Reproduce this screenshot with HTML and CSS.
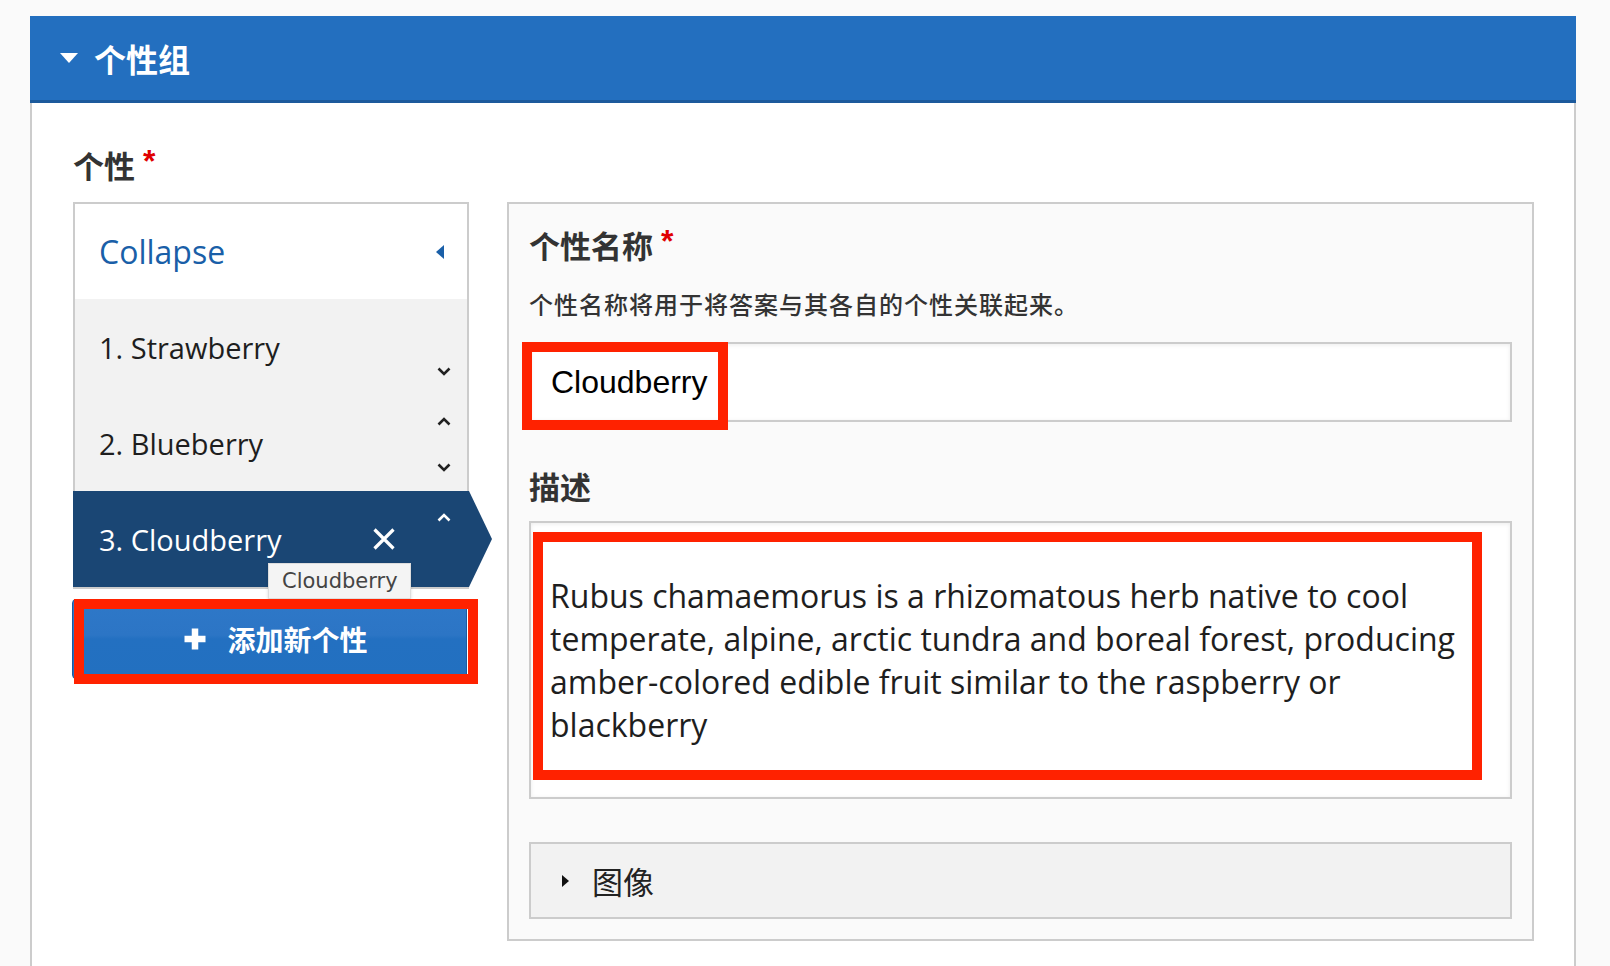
FILE: index.html
```html
<!DOCTYPE html>
<html lang="zh">
<head>
<meta charset="utf-8">
<title>个性组</title>
<link rel="stylesheet" href="styles.css">
</head>
<body>
<div class="page">
  <section class="group">
    <div class="group-head">
      <span class="tri-down"></span>
      <span class="group-title">个性组</span>
    </div>
    <div class="group-body">
      <div class="field-label">个性<span class="req">*</span></div>
      <div class="fields">
        <div class="left-col">
          <div class="tabs">
            <div class="tab-collapse">
              <span class="collapse-text">Collapse</span>
              <svg width="8" height="14" viewBox="0 0 8 14"><path d="M8 0 L0 7 L8 14Z" fill="#1a5fa8"/></svg>
            </div>
            <div class="tab">
              <span class="tab-text">1. Strawberry</span>
              <div class="arrows">
                <span class="ph"></span>
                <svg width="14" height="9" viewBox="0 0 14 9"><path d="M1.5 1.5 L7 7 L12.5 1.5" stroke="#222" stroke-width="2.6" fill="none"/></svg>
              </div>
            </div>
            <div class="tab">
              <span class="tab-text">2. Blueberry</span>
              <div class="arrows">
                <svg width="14" height="9" viewBox="0 0 14 9"><path d="M1.5 7.5 L7 2 L12.5 7.5" stroke="#222" stroke-width="2.6" fill="none"/></svg>
                <svg width="14" height="9" viewBox="0 0 14 9"><path d="M1.5 1.5 L7 7 L12.5 1.5" stroke="#222" stroke-width="2.6" fill="none"/></svg>
              </div>
            </div>
            <div class="tab active">
              <span class="tab-text">3. Cloudberry</span>
              <svg class="x-icon" width="24" height="24" viewBox="0 0 24 24"><path d="M2.5 2.5 L21.5 21.5 M21.5 2.5 L2.5 21.5" stroke="#fff" stroke-width="3.2" fill="none"/></svg>
              <div class="arrows">
                <svg width="14" height="9" viewBox="0 0 14 9"><path d="M1.5 7.5 L7 2 L12.5 7.5" stroke="#fff" stroke-width="2.6" fill="none"/></svg>
                <span class="ph"></span>
              </div>
              <div class="tooltip">Cloudberry</div>
            </div>
          </div>
          <div class="add-wrap">
            <button class="add-btn">
              <svg width="24" height="24" viewBox="0 0 24 24"><path d="M12 1.5 V22.5 M1.5 12 H22.5" stroke="#fff" stroke-width="6.5" fill="none"/></svg>
              <span>添加新个性</span>
            </button>
            <div class="hl hl-add"></div>
          </div>
        </div>
        <div class="detail">
          <div class="d-label">个性名称<span class="req">*</span></div>
          <div class="d-desc">个性名称将用于将答案与其各自的个性关联起来。</div>
          <div class="input-wrap">
            <div class="input">Cloudberry</div>
            <div class="hl hl-input"></div>
          </div>
          <div class="d-label d-label2">描述</div>
          <div class="textarea-wrap">
            <div class="textarea">Rubus chamaemorus is a rhizomatous herb native to cool temperate, alpine, arctic tundra and boreal forest, producing amber-colored edible fruit similar to the raspberry or blackberry</div>
            <div class="hl hl-text"></div>
          </div>
          <div class="details-box">
            <svg width="7" height="12" viewBox="0 0 7 12"><path d="M0 0 L7 6 L0 12Z" fill="#111"/></svg>
            <span>图像</span>
          </div>
        </div>
      </div>
    </div>
  </section>
</div>
</body>
</html>
```
FILE: styles.css
```css
* { box-sizing: border-box; }
body {
  margin: 0;
  background: #fafafa;
  font-family: "Open Sans", "Noto Sans CJK SC", sans-serif;
}
.page { padding: 16px 34px 0 30px; }
.group-head {
  height: 87px;
  background: #236fbf;
  border-bottom: 3px solid #1c5a9c;
  display: flex;
  align-items: center;
  padding-left: 30px;
  gap: 16px;
}
.tri-down {
  width: 0; height: 0;
  border-left: 9px solid transparent;
  border-right: 9px solid transparent;
  border-top: 10px solid #fff;
}
.group-title {
  color: #fff;
  font-family: "Noto Sans CJK SC", sans-serif;
  font-size: 32px;
  font-weight: 600;
  line-height: 40px;
}
.group-body {
  background: #fff;
  border-left: 2px solid #ccc;
  border-right: 2px solid #ccc;
  padding: 38px 40px 40px 41px;
  min-height: 900px;
}
.field-label {
  font-family: "Noto Sans CJK SC", sans-serif;
  font-weight: 700;
  font-size: 31px;
  line-height: 40px;
  color: #333;
}
.req {
  color: #e00000;
  font-family: "Liberation Sans", sans-serif;
  font-size: 32px;
  margin-left: 8px;
  vertical-align: 6px;
}
.fields {
  display: flex;
  gap: 38px;
  margin-top: 17px;
  align-items: flex-start;
}
.left-col { width: 396px; flex: none; }
.tabs {
  border: 2px solid #ccc;
  background: #f2f2f2;
}
.tab-collapse {
  height: 95px;
  background: #fff;
  display: flex;
  align-items: center;
  justify-content: space-between;
  padding: 0 23px 0 24px;
}
.collapse-text {
  color: #1a5fa8;
  font-size: 32px;
}
.tab {
  height: 96px;
  display: flex;
  align-items: center;
  padding: 0 16px 0 24px;
  position: relative;
  font-size: 29px;
  color: #1e1e1e;
}
.tab-text { flex: 1; }
.arrows {
  align-self: stretch;
  display: flex;
  flex-direction: column;
  justify-content: space-between;
  padding: 22px 0 19px;
  width: 14px;
}
.arrows svg { display: block; }
.ph { display: block; height: 9px; }
.tab.active {
  background: #1a4674;
  color: #fff;
  margin: 0 -2px;
  padding: 0 18px 0 26px;
}
.tab.active::after {
  content: "";
  position: absolute;
  left: 100%;
  top: 0;
  width: 23px;
  height: 100%;
  background: #1a4674;
  clip-path: polygon(0 0, 100% 50%, 0 100%);
}
.x-icon { margin-right: 41px; display: block; }
.tooltip {
  position: absolute;
  left: 195px;
  top: 72px;
  width: 143px;
  height: 36px;
  background: #f4f4f4;
  border: 1px solid #ddd;
  box-shadow: 0 1px 3px rgba(0,0,0,0.15);
  color: #444;
  font-family: "DejaVu Sans", sans-serif;
  font-size: 21px;
  line-height: 34px;
  padding-left: 13px;
  z-index: 2;
}
.add-wrap { position: relative; margin-top: 10px; }
.add-btn {
  display: flex;
  align-items: center;
  justify-content: center;
  gap: 20px;
  width: 395px;
  height: 80px;
  margin-left: -1px;
  border: 1px solid #1b5a9f;
  border-radius: 4px;
  background: linear-gradient(#2e78c8 0%, #2c75c5 45%, #2370c1 50%, #2270c0 100%);
  color: #fff;
  font-family: "Noto Sans CJK SC", sans-serif;
  font-weight: 700;
  font-size: 28px;
  padding: 0 0 0 12px;
}
.add-btn svg { display: block; }
.hl {
  position: absolute;
  border: 10px solid #ff2200;
  z-index: 5;
}
.hl-add { left: 1px; top: 0; width: 404px; height: 85px; }
.detail {
  flex: 1;
  border: 2px solid #ccc;
  background: #fafafa;
  padding: 17px 20px 20px;
}
.d-label {
  font-family: "Noto Sans CJK SC", sans-serif;
  font-weight: 700;
  font-size: 31px;
  line-height: 40px;
  color: #333;
}
.d-desc {
  font-family: "Noto Sans CJK SC", sans-serif;
  font-size: 24px;
  font-weight: 500;
  line-height: 34px;
  letter-spacing: 1px;
  margin-top: 22px;
  color: #333;
}
.input-wrap { position: relative; margin-top: 21px; }
.input {
  height: 80px;
  border: 2px solid #ccc;
  background: #fff;
  box-shadow: inset 0 1px 4px rgba(0,0,0,0.08);
  display: flex;
  align-items: center;
  padding-left: 20px;
  font-family: "Liberation Sans", sans-serif;
  font-size: 32px;
  color: #000;
}
.hl-input { left: -7px; top: 0; width: 206px; height: 88px; }
.d-label2 { margin-top: 44px; }
.textarea-wrap { position: relative; margin-top: 15px; }
.textarea {
  height: 278px;
  border: 2px solid #ccc;
  background: #fff;
  box-shadow: inset 0 1px 4px rgba(0,0,0,0.08);
  padding: 51px 35px 0 19px;
  font-size: 32px;
  line-height: 43px;
  color: #1e1e1e;
}
.hl-text { left: 4px; top: 11px; width: 949px; height: 248px; }
.details-box {
  margin-top: 43px;
  height: 77px;
  border: 2px solid #ccc;
  background: #f2f2f2;
  display: flex;
  align-items: center;
  gap: 23px;
  padding-left: 31px;
  font-family: "Noto Sans CJK SC", sans-serif;
  font-size: 31px;
  color: #222;
}
.details-box svg { display: block; }
```
